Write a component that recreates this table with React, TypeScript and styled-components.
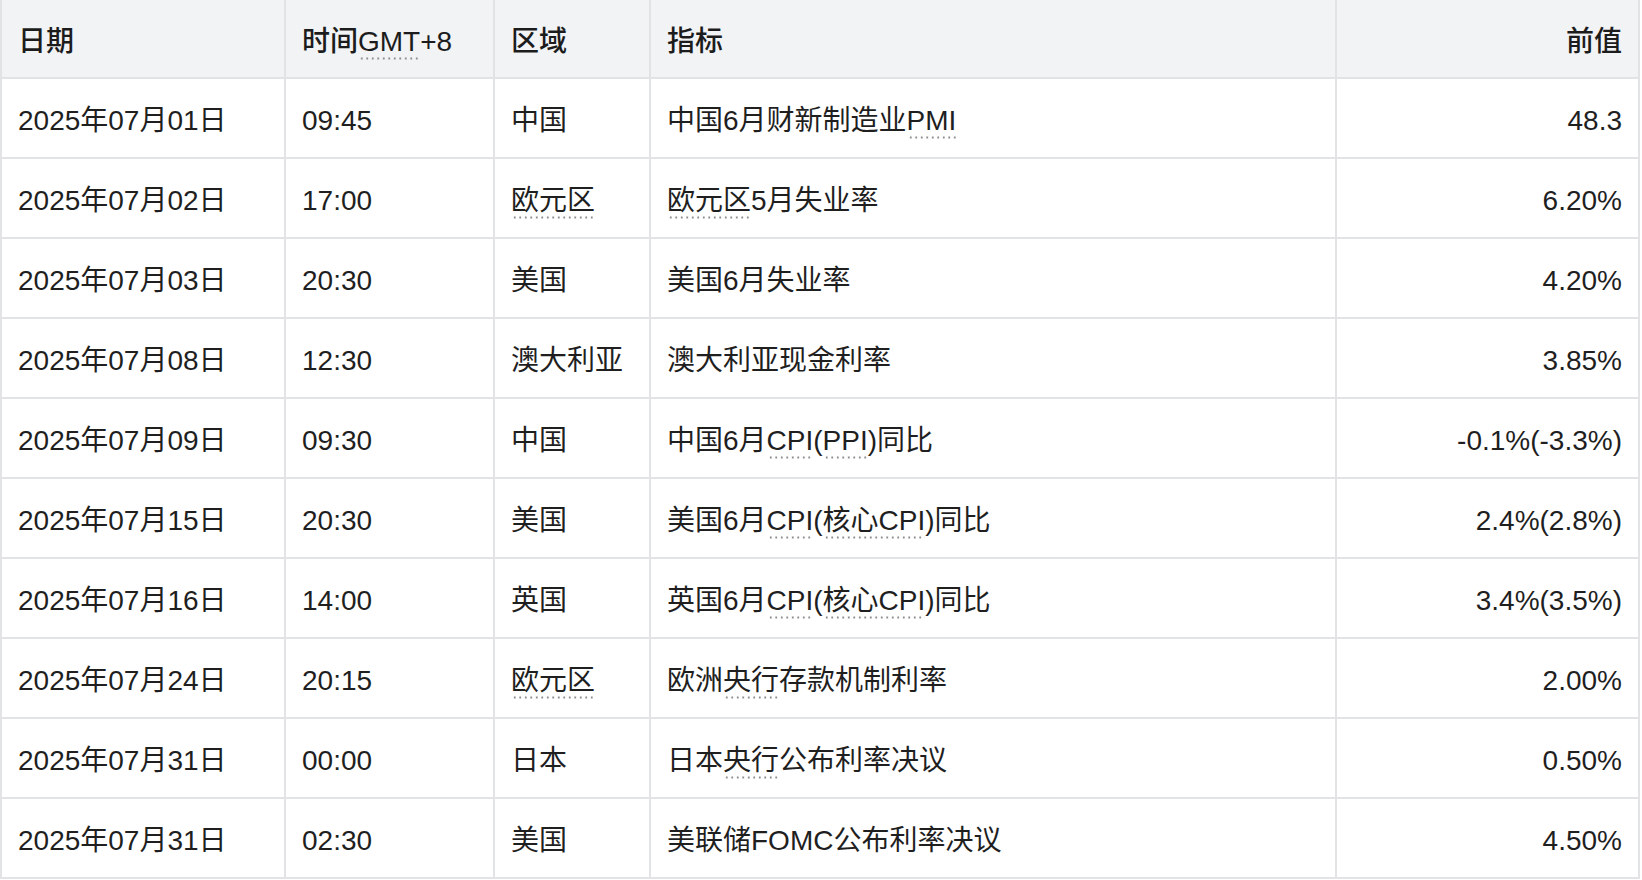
import React from "react";
import styled, { createGlobalStyle } from "styled-components";

const GlobalStyle = createGlobalStyle`
  html, body {
    margin: 0;
    padding: 0;
    background: #ffffff;
  }
  body {
    font-family: "Liberation Sans", "Noto Sans CJK SC", sans-serif;
    color: #1f1f1f;
    -webkit-font-smoothing: antialiased;
  }
`;

const Table = styled.table`
  width: 1640px;
  table-layout: fixed;
  border-collapse: collapse;
  font-size: 28px;
  line-height: 1.2;
`;

const HeadCell = styled.th<{ $align?: "left" | "right" }>`
  height: 71px;
  padding: 6px 16px 0;
  background: #f2f3f5;
  border: 2px solid #e2e3e5;
  border-top: none;
  text-align: ${(p) => p.$align ?? "left"};
  font-weight: 500;
  color: #1c1c1c;
  white-space: nowrap;
  vertical-align: middle;
`;

const Cell = styled.td<{ $align?: "left" | "right" }>`
  height: 72px;
  padding: 6px 16px 0;
  border: 2px solid #e2e3e5;
  text-align: ${(p) => p.$align ?? "left"};
  font-weight: 400;
  white-space: nowrap;
  vertical-align: middle;
`;

const Term = styled.span`
  padding-bottom: 3px;
  background-image: radial-gradient(circle, #8e8e8e 0.9px, transparent 1.3px);
  background-size: 5.5px 3px;
  background-repeat: repeat-x;
  background-position: 1px 100%;
`;

type Row = {
  date: string;
  time: string;
  region: React.ReactNode;
  indicator: React.ReactNode;
  prev: string;
};

const euro = <Term>欧元区</Term>;

const rows: Row[] = [
  {
    date: "2025年07月01日",
    time: "09:45",
    region: "中国",
    indicator: (
      <>
        中国6月财新制造业<Term>PMI</Term>
      </>
    ),
    prev: "48.3",
  },
  {
    date: "2025年07月02日",
    time: "17:00",
    region: euro,
    indicator: (
      <>
        <Term>欧元区</Term>5月失业率
      </>
    ),
    prev: "6.20%",
  },
  { date: "2025年07月03日", time: "20:30", region: "美国", indicator: "美国6月失业率", prev: "4.20%" },
  { date: "2025年07月08日", time: "12:30", region: "澳大利亚", indicator: "澳大利亚现金利率", prev: "3.85%" },
  {
    date: "2025年07月09日",
    time: "09:30",
    region: "中国",
    indicator: (
      <>
        中国6月<Term>CPI</Term>(<Term>PPI</Term>)同比
      </>
    ),
    prev: "-0.1%(-3.3%)",
  },
  {
    date: "2025年07月15日",
    time: "20:30",
    region: "美国",
    indicator: (
      <>
        美国6月<Term>CPI</Term>(<Term>核心CPI</Term>)同比
      </>
    ),
    prev: "2.4%(2.8%)",
  },
  {
    date: "2025年07月16日",
    time: "14:00",
    region: "英国",
    indicator: (
      <>
        英国6月<Term>CPI</Term>(<Term>核心CPI</Term>)同比
      </>
    ),
    prev: "3.4%(3.5%)",
  },
  {
    date: "2025年07月24日",
    time: "20:15",
    region: euro,
    indicator: (
      <>
        欧洲<Term>央行</Term>存款机制利率
      </>
    ),
    prev: "2.00%",
  },
  {
    date: "2025年07月31日",
    time: "00:00",
    region: "日本",
    indicator: (
      <>
        日本<Term>央行</Term>公布利率决议
      </>
    ),
    prev: "0.50%",
  },
  { date: "2025年07月31日", time: "02:30", region: "美国", indicator: "美联储FOMC公布利率决议", prev: "4.50%" },
];

const widths = [284, 209, 156, 686, 303];

export default function App() {
  return (
    <>
      <GlobalStyle />
      <Table>
        <colgroup>
          {widths.map((w, i) => (
            <col key={i} style={{ width: w }} />
          ))}
        </colgroup>
        <thead>
          <tr>
            <HeadCell>日期</HeadCell>
            <HeadCell>
              时间<Term>GMT</Term>+8
            </HeadCell>
            <HeadCell>区域</HeadCell>
            <HeadCell>指标</HeadCell>
            <HeadCell $align="right">前值</HeadCell>
          </tr>
        </thead>
        <tbody>
          {rows.map((r, i) => (
            <tr key={i}>
              <Cell>{r.date}</Cell>
              <Cell>{r.time}</Cell>
              <Cell>{r.region}</Cell>
              <Cell>{r.indicator}</Cell>
              <Cell $align="right">{r.prev}</Cell>
            </tr>
          ))}
        </tbody>
      </Table>
    </>
  );
}
